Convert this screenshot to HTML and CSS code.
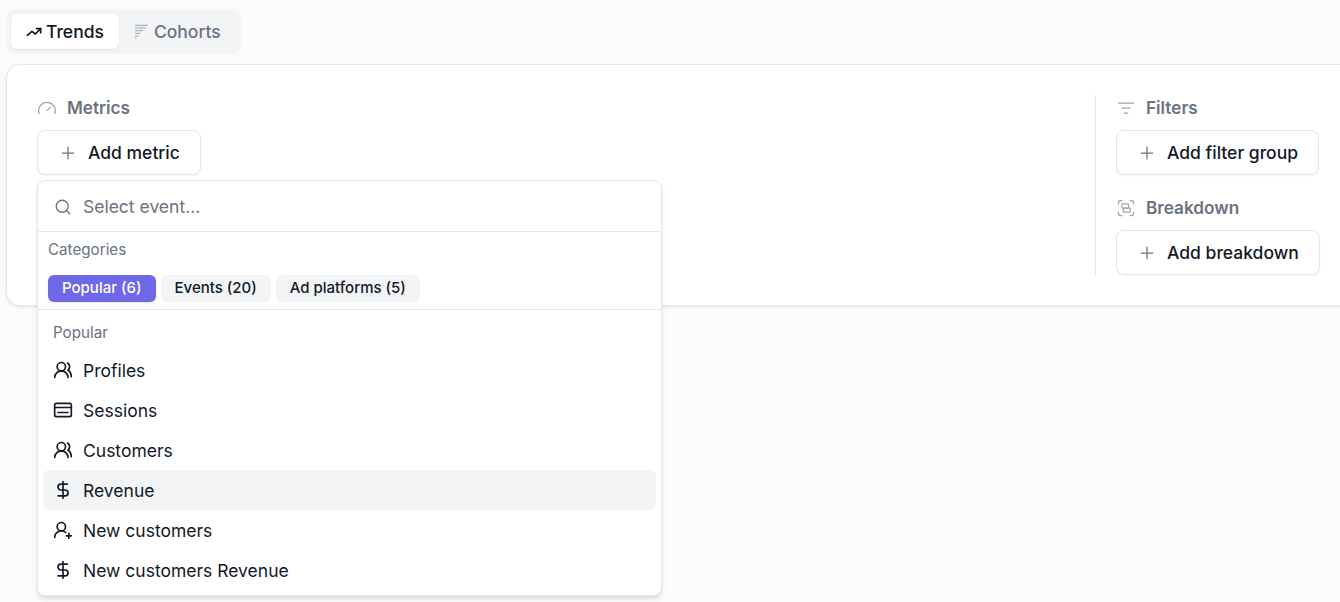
FILE: index.html
```html
<!DOCTYPE html>
<html lang="en">
<head>
    <meta charset="UTF-8">
    <meta name="viewport" content="width=device-width, initial-scale=1.0">
    <title>Trends</title>
    <link rel="stylesheet" href="styles.css">
</head>
<body>
    <div class="tabs">
        <button class="tab tab-active">
            <svg class="tab-icon tab-icon-bold" viewBox="0 0 24 24"><path d="M22 7l-8 8-5-4-7 6"/><path d="M16 7h6v6"/></svg>
            Trends
        </button>
        <button class="tab">
            <svg class="tab-icon tab-icon-light" viewBox="0 0 24 24"><path d="M2 2h18M2 6h15M2 10h11M2 14h7M2 18h4M2 21h1"/></svg>
            Cohorts
        </button>
    </div>

    <div class="card">
        <div class="metrics">
            <div class="section-label">
                <svg class="label-icon gauge-icon" viewBox="0 0 24 18"><path d="M12 14l4-4"/><path d="M3.34 19a10 10 0 1 1 17.32 0"/></svg>
                Metrics
            </div>
            <button class="add-btn">
                <svg class="plus-icon" viewBox="0 0 24 24"><path d="M5 12h14M12 5v14"/></svg>
                Add metric
            </button>

            <div class="popover">
                <div class="search-row">
                    <svg class="search-icon" viewBox="0 0 24 24"><circle cx="11" cy="11" r="8"/><path d="M21 21l-4.3-4.3"/></svg>
                    <span class="search-placeholder">Select event...</span>
                </div>
                <div class="categories">
                    <div class="categories-title">Categories</div>
                    <div class="pills">
                        <span class="pill pill-active">Popular (6)</span>
                        <span class="pill">Events (20)</span>
                        <span class="pill">Ad platforms (5)</span>
                    </div>
                </div>
                <div class="list">
                    <div class="list-title">Popular</div>
                    <div class="list-item">
                        <svg class="item-icon" viewBox="0 0 24 24"><path d="M18 21a8 8 0 0 0-16 0"/><circle cx="10" cy="8" r="5"/><path d="M22 20c0-3.37-2-6.5-4-8a5 5 0 0 0-.45-8.3"/></svg>
                        Profiles
                    </div>
                    <div class="list-item">
                        <svg class="item-icon" viewBox="0 0 24 24"><rect x="2" y="4" width="20" height="16" rx="2"/><path d="M2 9h20"/><path d="M6 15h12"/></svg>
                        Sessions
                    </div>
                    <div class="list-item">
                        <svg class="item-icon" viewBox="0 0 24 24"><path d="M18 21a8 8 0 0 0-16 0"/><circle cx="10" cy="8" r="5"/><path d="M22 20c0-3.37-2-6.5-4-8a5 5 0 0 0-.45-8.3"/></svg>
                        Customers
                    </div>
                    <div class="list-item list-item-hover">
                        <svg class="item-icon" viewBox="0 0 24 24"><path d="M12 2v20"/><path d="M17 5H9.5a3.5 3.5 0 0 0 0 7h5a3.5 3.5 0 0 1 0 7H6"/></svg>
                        Revenue
                    </div>
                    <div class="list-item">
                        <svg class="item-icon" viewBox="0 0 24 24"><path d="M2 21a8 8 0 0 1 13.292-6"/><circle cx="10" cy="8" r="5"/><path d="M19 16v6"/><path d="M22 19h-6"/></svg>
                        New customers
                    </div>
                    <div class="list-item">
                        <svg class="item-icon" viewBox="0 0 24 24"><path d="M12 2v20"/><path d="M17 5H9.5a3.5 3.5 0 0 0 0 7h5a3.5 3.5 0 0 1 0 7H6"/></svg>
                        New customers Revenue
                    </div>
                </div>
            </div>
        </div>

        <div class="side">
            <div class="section-label">
                <svg class="label-icon" viewBox="0 0 24 24"><path d="M3 6h18M7 12h10M10 18h4"/></svg>
                Filters
            </div>
            <button class="add-btn">
                <svg class="plus-icon" viewBox="0 0 24 24"><path d="M5 12h14M12 5v14"/></svg>
                Add filter group
            </button>
            <div class="section-label section-label-spaced">
                <svg class="label-icon" viewBox="0 0 24 24"><path d="M3 7V5a2 2 0 0 1 2-2h2M17 3h2a2 2 0 0 1 2 2v2M21 17v2a2 2 0 0 1-2 2h-2M7 21H5a2 2 0 0 1-2-2v-2"/><rect x="7" y="7" width="8" height="5" rx="1"/><rect x="9" y="12" width="8" height="5" rx="1"/></svg>
                Breakdown
            </div>
            <button class="add-btn">
                <svg class="plus-icon" viewBox="0 0 24 24"><path d="M5 12h14M12 5v14"/></svg>
                Add breakdown
            </button>
        </div>
    </div>
</body>
</html>
```

FILE: styles.css
```css
* {
    box-sizing: border-box;
}
html, body {
    height: 100%;
    overflow: hidden;
}
body {
    font-family: 'Inter', sans-serif;
    margin: 0;
    padding: 9px 0 0 6px;
    background-color: #fafbfb;
    color: #111827;
    font-size: 17.5px;
}
button {
    font-family: inherit;
    cursor: pointer;
}
svg {
    fill: none;
    stroke: currentColor;
    stroke-width: 2;
    stroke-linecap: round;
    stroke-linejoin: round;
    flex-shrink: 0;
}

/* tabs */
.tabs {
    display: inline-flex;
    height: 45px;
    padding: 5px;
    background: #f3f4f6;
    border-radius: 10px;
    vertical-align: top;
}
.tab {
    display: flex;
    align-items: center;
    gap: 4px;
    height: 35px;
    padding: 0 15px;
    border: none;
    border-radius: 7px;
    background: none;
    color: #6b7280;
    font-size: 17.5px;
    font-weight: 500;
}
.tab-active {
    background: #fff;
    color: #111827;
    box-shadow: 0 1px 2px rgba(0, 0, 0, 0.08);
}
.tab-icon {
    width: 16px;
    height: 16px;
}
.tab-icon-bold {
    stroke-width: 2.5;
}
.tab-icon-light {
    stroke-width: 1.5;
    color: #9ca3af;
}

/* main card */
.card {
    display: flex;
    justify-content: space-between;
    width: 1360px;
    height: 242px;
    margin-top: 10px;
    padding: 30px;
    background: #fff;
    border: 1px solid #e5e7eb;
    border-radius: 14px;
    box-shadow: 0 1px 3px rgba(0, 0, 0, 0.1);
}
.metrics {
    position: relative;
}
.side {
    width: 265px;
    padding-left: 20px;
    margin-right: -25px;
    border-left: 1px solid #e5e7eb;
}
.section-label {
    display: flex;
    align-items: center;
    gap: 10px;
    height: 25px;
    margin-bottom: 10px;
    color: #6b7280;
    font-size: 17.2px;
    font-weight: 600;
}
.section-label-spaced {
    margin-top: 20px;
}
.label-icon {
    width: 20px;
    height: 20px;
    color: #9ca3af;
    stroke-width: 1.5;
}
.gauge-icon {
    height: 15px;
    align-self: flex-start;
    margin-top: 4px;
}
.add-btn {
    display: flex;
    align-items: center;
    gap: 10px;
    height: 45px;
    padding: 0 20px;
    background: #fff;
    border: 1px solid #e5e7eb;
    border-radius: 8px;
    box-shadow: 0 1px 2px rgba(0, 0, 0, 0.05);
    color: #111827;
    font-size: 17.5px;
    font-weight: 500;
}
.plus-icon {
    width: 20px;
    height: 20px;
    color: #6b7280;
    stroke-width: 1.5;
}

/* event picker */
.popover {
    position: absolute;
    top: 85px;
    left: 0;
    width: 625px;
    height: 416px;
    background: #fff;
    border: 1px solid #e5e7eb;
    border-radius: 8px;
    box-shadow: 0 4px 6px -1px rgba(0, 0, 0, 0.1), 0 2px 4px -2px rgba(0, 0, 0, 0.1);
    z-index: 10;
}
.search-row {
    display: flex;
    align-items: center;
    gap: 11px;
    height: 51px;
    padding: 1px 16px 0;
    border-bottom: 1px solid #e5e7eb;
}
.search-icon {
    width: 18px;
    height: 18px;
    color: #6b7280;
    stroke-width: 1.75;
}
.search-placeholder {
    color: #6b7280;
    font-size: 17.5px;
}
.categories {
    height: 78px;
    padding: 10px 10px 0;
    border-bottom: 1px solid #e5e7eb;
}
.categories-title {
    height: 20px;
    line-height: 15px;
    margin-bottom: 13px;
    color: #6b7280;
    font-size: 15.2px;
}
.pills {
    display: flex;
    gap: 5px;
}
.pill {
    display: block;
    height: 27px;
    line-height: 25px;
    padding: 0 14px;
    background: #f3f4f6;
    border-radius: 6px;
    color: #111827;
    font-size: 15px;
    font-weight: 500;
}
.pill-active {
    background: #6e68e8;
    color: #fff;
    box-shadow: 0 1px 2px rgba(0, 0, 0, 0.1);
}
.list {
    padding: 0 5px;
}
.list-title {
    height: 40px;
    padding: 13px 10px 0;
    color: #6b7280;
    font-size: 15.2px;
}
.list-item {
    display: flex;
    align-items: center;
    gap: 10px;
    height: 40px;
    padding: 0 10px;
    border-radius: 6px;
    font-size: 17.5px;
    color: #111827;
}
.list-item-hover {
    background: #f3f4f6;
}
.item-icon {
    width: 20px;
    height: 20px;
    stroke-width: 2;
}
```
